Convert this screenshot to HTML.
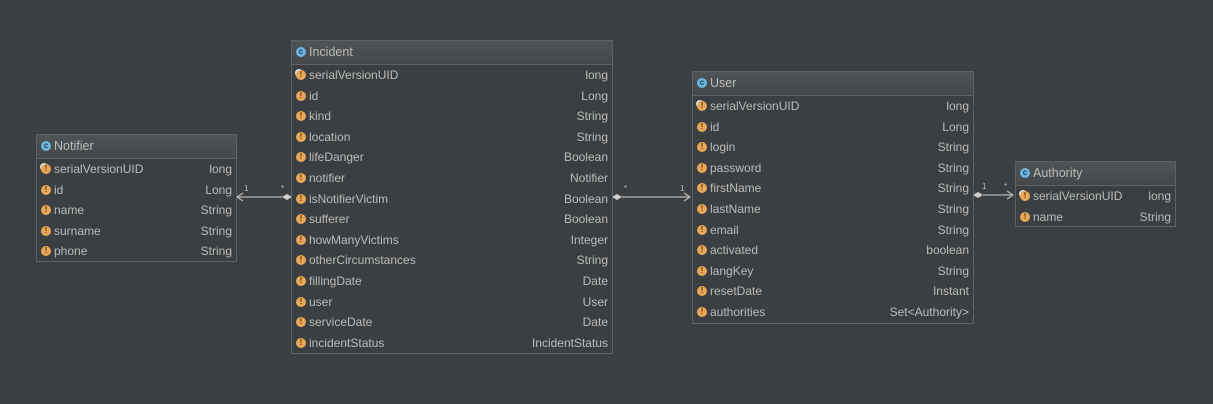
<!DOCTYPE html>
<html><head><style>
body{margin:0;width:1213px;height:404px;background:#3c3f41;font-family:"Liberation Sans",sans-serif;font-size:12px;color:#bbbbbb;position:relative;overflow:hidden}
.box{position:absolute;border:1px solid #5f6264;background:#3c3f41;box-sizing:border-box}
.hd{height:23px;border-bottom:1px solid #5f6264;background:linear-gradient(#505355,#45484a);line-height:23px;padding-left:17px;position:relative;font-size:12.5px}
.hd:before{content:"c";position:absolute;left:4px;top:6px;width:10px;height:10px;border-radius:50%;background:#6cb6e0;color:#1d3e55;font-size:8px;line-height:9px;text-align:center;font-weight:bold}
.r{height:20.6px;line-height:20.6px;position:relative;padding-left:17px;padding-right:4px}
.r:before{content:"!";position:absolute;left:4px;top:5px;width:10px;height:10px;border-radius:50%;background:#e8a857;color:#5a3a10;font-size:8px;line-height:10px;text-align:center;font-weight:bold}
.r.s:before{background:#e8a857;box-shadow:-2px -2px 0 -1px #ddd}
.r span{float:right}
.rows{padding-top:0}
svg{position:absolute;left:0;top:0}
.lb{position:absolute;font-size:8px;color:#bbb}
</style></head><body>
<svg width="1213" height="404">
<g stroke="#b8b8b8" stroke-width="1.2" fill="none">
<line x1="237" y1="197" x2="282" y2="197"/><polyline points="243,193 237,197 243,201"/>
<line x1="622" y1="197" x2="690" y2="197"/><polyline points="684,193 690,197 684,201"/>
<line x1="983" y1="195" x2="1013" y2="195"/><polyline points="1007,191 1013,195 1007,199"/>
</g>
<g fill="#cfcfcf">
<polygon points="282,197 287,194 292,197 287,200"/>
<polygon points="612,197 617,194 622,197 617,200"/>
<polygon points="973,195 978,192 983,195 978,198"/>
</g>
</svg>
<div class="lb" style="left:244px;top:184px">1</div><div class="lb" style="left:281px;top:184px">*</div>
<div class="lb" style="left:624px;top:184px">*</div><div class="lb" style="left:680px;top:184px">1</div>
<div class="lb" style="left:982px;top:182px">1</div><div class="lb" style="left:1004px;top:182px">*</div>

<div class="box" style="left:36px;top:134px;width:201px;height:128px">
<div class="hd">Notifier</div><div class="rows">
<div class="r s">serialVersionUID<span>long</span></div>
<div class="r">id<span>Long</span></div>
<div class="r">name<span>String</span></div>
<div class="r">surname<span>String</span></div>
<div class="r">phone<span>String</span></div></div></div>

<div class="box" style="left:291px;top:40px;width:322px;height:314px">
<div class="hd">Incident</div><div class="rows">
<div class="r s">serialVersionUID<span>long</span></div>
<div class="r">id<span>Long</span></div>
<div class="r">kind<span>String</span></div>
<div class="r">location<span>String</span></div>
<div class="r">lifeDanger<span>Boolean</span></div>
<div class="r">notifier<span>Notifier</span></div>
<div class="r">isNotifierVictim<span>Boolean</span></div>
<div class="r">sufferer<span>Boolean</span></div>
<div class="r">howManyVictims<span>Integer</span></div>
<div class="r">otherCircumstances<span>String</span></div>
<div class="r">fillingDate<span>Date</span></div>
<div class="r">user<span>User</span></div>
<div class="r">serviceDate<span>Date</span></div>
<div class="r">incidentStatus<span>IncidentStatus</span></div></div></div>

<div class="box" style="left:692px;top:71px;width:282px;height:253px">
<div class="hd">User</div><div class="rows">
<div class="r s">serialVersionUID<span>long</span></div>
<div class="r">id<span>Long</span></div>
<div class="r">login<span>String</span></div>
<div class="r">password<span>String</span></div>
<div class="r">firstName<span>String</span></div>
<div class="r">lastName<span>String</span></div>
<div class="r">email<span>String</span></div>
<div class="r">activated<span>boolean</span></div>
<div class="r">langKey<span>String</span></div>
<div class="r">resetDate<span>Instant</span></div>
<div class="r">authorities<span>Set&lt;Authority&gt;</span></div></div></div>

<div class="box" style="left:1015px;top:161px;width:161px;height:66px">
<div class="hd">Authority</div><div class="rows">
<div class="r s">serialVersionUID<span>long</span></div>
<div class="r">name<span>String</span></div></div></div>
</body></html>
